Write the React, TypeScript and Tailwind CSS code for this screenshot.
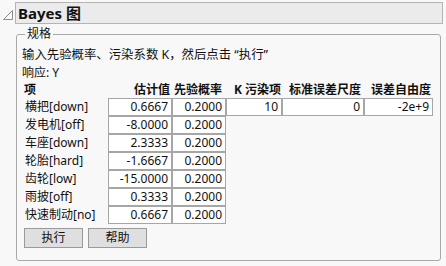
import React from "react";

const rows: [string, string][] = [
  ["横把[down]", "0.6667"],
  ["发电机[off]", "-8.0000"],
  ["车座[down]", "2.3333"],
  ["轮胎[hard]", "-1.6667"],
  ["齿轮[low]", "-15.0000"],
  ["雨披[off]", "0.3333"],
  ["快速制动[no]", "0.6667"],
];

const cell =
  "h-[18px] border border-[#a6a6a6] bg-white text-right pr-[3px] leading-[16px] whitespace-nowrap";

export default function App() {
  return (
    <div className="w-[446px] h-[266px] bg-[#f8f8f8] text-[12px] text-[#111] font-['Noto_Sans','Noto_Sans_CJK_SC',sans-serif] overflow-hidden">
      <div className="flex items-start pt-[2px]">
        <div className="w-[15px] h-[22px] flex items-center justify-center">
          <svg width="15" height="22" viewBox="0 0 15 22">
            <path d="M12.5 8.5 L12.5 17.5 L3.5 17.5 Z" fill="#fafafa" stroke="#8c8c8c" strokeWidth="1" />
          </svg>
        </div>
        <div className="w-[428px] h-[22px] border border-[#b4b4b4] bg-[#ebebeb] flex items-center pl-[2px]">
          <span className="text-[15px] font-bold leading-[20px]">Bayes 图</span>
        </div>
      </div>
      <fieldset className="ml-[16px] mt-[2px] w-[425px] h-[235px] border border-[#a9a9a9] rounded-[3px] px-[5px]">
        <legend className="ml-[3px] px-[2px] leading-[16px]">规格</legend>
        <div className="pt-[3px] leading-[19px] text-[12.4px]">输入先验概率、污染系数 K，然后点击 “执行”</div>
        <div className="leading-[18px]">响应: Y</div>
        <div className="ml-[2px] grid grid-cols-[84px_64px_54px_56px_82px_69px]">
          <div className="h-[16px] leading-[16px] font-bold pl-[0px]">项</div>
          <div className="h-[16px] leading-[16px] font-bold text-right pr-[2px]">估计值</div>
          <div className="h-[16px] leading-[16px] font-bold text-right pr-[4px]">先验概率</div>
          <div className="h-[16px] leading-[16px] font-bold text-right pr-[1px] whitespace-nowrap">K 污染项</div>
          <div className="h-[16px] leading-[16px] font-bold text-right pr-[3px] whitespace-nowrap">标准误差尺度</div>
          <div className="h-[16px] leading-[16px] font-bold text-right pr-[2px] whitespace-nowrap">误差自由度</div>
          {rows.map(([label, est], i) => (
            <React.Fragment key={label}>
              <div className="h-[18px] leading-[18px] pl-[1px] whitespace-nowrap">{label}</div>
              <div className={cell}>{est}</div>
              <div className={cell}>0.2000</div>
              {i === 0 ? (
                <>
                  <div className={cell}>10</div>
                  <div className={cell}>0</div>
                  <div className={cell}>-2e+9</div>
                </>
              ) : (
                <>
                  <div />
                  <div />
                  <div />
                </>
              )}
            </React.Fragment>
          ))}
        </div>
        <div className="ml-[2px] mt-[4px] flex gap-[5px]">
          <button className="w-[59px] h-[20px] border border-[#9a9a9a] bg-[#dfdfdf] leading-[18px] text-center">执行</button>
          <button className="w-[59px] h-[20px] border border-[#9a9a9a] bg-[#dfdfdf] leading-[18px] text-center">帮助</button>
        </div>
      </fieldset>
    </div>
  );
}
